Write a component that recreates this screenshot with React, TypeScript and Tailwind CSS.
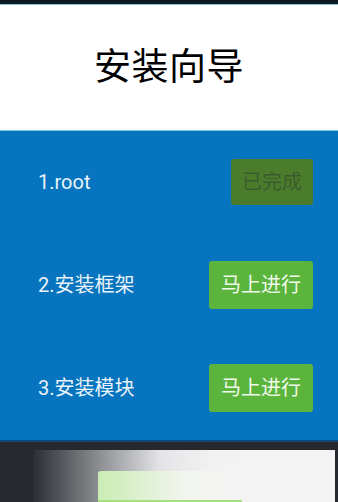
const font = "font-['Roboto','Noto_Sans_CJK_SC',sans-serif]"

const steps = [
  { label: '1.root', done: true },
  { label: '2.安装框架', done: false },
  { label: '3.安装模块', done: false },
]

export default function App() {
  return (
    <div className={`w-[338px] h-[502px] overflow-hidden flex flex-col bg-[#25282d] ${font}`}>
      {/* status bar remnant */}
      <div className="h-[5px] bg-[#0d1a1f] border-b border-[#8fc3d6] shrink-0" />

      {/* header */}
      <div className="h-[125px] bg-white flex items-center justify-center shrink-0">
        <h1 className="text-[37px] leading-none text-black tracking-[0.5px]">安装向导</h1>
      </div>

      {/* steps */}
      <div className="h-[310px] bg-[#0774bf] border-t border-[#7cc0df] flex flex-col pt-[27px] pl-[38px] pr-[25px] gap-[56px] shrink-0">
        {steps.map((s) => (
          <div key={s.label} className="flex items-center justify-between h-[47px]">
            <span className="text-[20px] text-[#e9f3f9]">{s.label}</span>
            {s.done ? (
              <button className="w-[82px] h-[46px] rounded-[3px] bg-[#4b7c2c] text-[#3c5c2e] text-[20px]">
                已完成
              </button>
            ) : (
              <button className="w-[104px] h-[48px] rounded-[3px] bg-[#5bb43c] text-[#f0faea] text-[20px]">
                马上进行
              </button>
            )}
          </div>
        ))}
      </div>

      {/* dark bottom with blurred dialog */}
      <div className="flex-1 border-t-2 border-[#0b4a78] pt-[8px] pl-[33px] pr-[3px]">
        <div className="h-full bg-[linear-gradient(to_right,#2b2e33_0%,#8c8e92_22%,#e4e4e6_42%,#f3f2f3_60%,#f5f4f5_100%)] pt-[21px] pl-[65px]">
          <div className="w-[144px] h-full rounded-t-[3px] bg-[linear-gradient(to_right,#c9ecb4,#f2f5ee_60%,#f5f4f5)] border-b-2 border-[#a6e07e]" />
        </div>
      </div>
    </div>
  )
}
